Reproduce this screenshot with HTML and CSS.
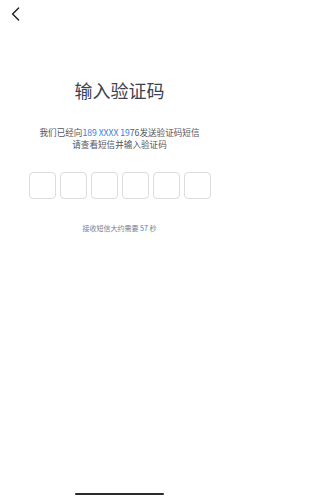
FILE: index.html
```html
<!DOCTYPE html>
<html lang="zh-CN">
<head>
<meta charset="utf-8">
<meta name="viewport" content="width=device-width, initial-scale=1">
<title>输入验证码</title>
<link rel="stylesheet" href="styles.css">
</head>
<body>
<div class="page">
  <header class="nav">
    <button class="back" aria-label="返回">
      <svg width="9" height="14" viewBox="0 0 9 14"><path d="M7.6 1 L1.6 7 L7.6 13" fill="none" stroke="#1d1d1f" stroke-width="1.4" stroke-linecap="round" stroke-linejoin="round"/></svg>
    </button>
  </header>
  <main class="content">
    <h1 class="title">输入验证码</h1>
    <p class="desc">我们已经向<span class="hl">189 XXXX 19</span>76发送验证码短信<br>请查看短信并输入验证码</p>
    <div class="codes">
      <div class="cell"></div>
      <div class="cell"></div>
      <div class="cell"></div>
      <div class="cell"></div>
      <div class="cell"></div>
      <div class="cell"></div>
    </div>
    <p class="hint">接收短信大约需要 <span class="hl">57</span> 秒</p>
  </main>
  <div class="home-bar"></div>
</div>
</body>
</html>
```
FILE: styles.css
```css
html, body {
  margin: 0;
  padding: 0;
  background: #ffffff;
}
body {
  font-family: "Noto Sans CJK SC", "Noto Sans", sans-serif;
  color: #3a3f4b;
}
.page {
  width: 239px;
  height: 500px;
  position: relative;
  overflow: hidden;
}
.nav {
  height: 28px;
  padding: 7px 0 0 11px;
  box-sizing: border-box;
}
.back {
  display: block;
  border: 0;
  background: none;
  padding: 0;
  margin: 0;
  width: 9px;
  height: 14px;
}
.back svg { display: block; }
.content {
  display: flex;
  flex-direction: column;
  align-items: center;
}
.title {
  margin: 51px 0 0;
  font-size: 18px;
  line-height: 22px;
  font-weight: 400;
  color: #3b4252;
}
.desc {
  margin: 26px 0 0;
  font-size: 8.6px;
  line-height: 11.5px;
  color: #50555f;
  text-align: center;
}
.hl { color: #2f7ee6; }
.codes {
  margin-top: 22px;
  display: flex;
  gap: 4px;
}
.cell {
  width: 27px;
  height: 27px;
  box-sizing: border-box;
  border: 1px solid #dcdcdc;
  border-radius: 4px;
}
.hint {
  margin: 24px 0 0;
  font-size: 7px;
  line-height: 10px;
  color: #7c808a;
}
.home-bar {
  position: absolute;
  left: 75px;
  bottom: 5px;
  width: 89px;
  height: 2px;
  border-radius: 1px;
  background: #2b2b2b;
}
```
